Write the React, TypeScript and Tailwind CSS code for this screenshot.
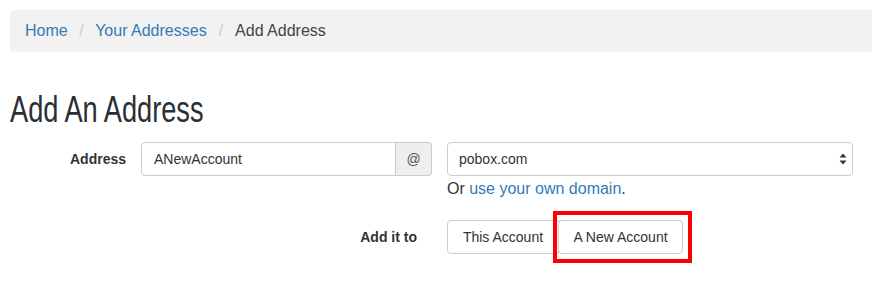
export default function App() {
  const sans = { fontFamily: '"Liberation Sans", Arial, sans-serif' };

  return (
    <div className="w-[872px] h-[290px] bg-white overflow-hidden pl-[10px] pt-[10px] text-[#333]" style={sans}>
      {/* Breadcrumb */}
      <div className="h-[42px] bg-[#f2f2f2] rounded-l-[4px] flex items-center pl-[15px] text-[16px]">
        <a className="text-[#337ab7]">Home</a>
        <span className="text-[#ccc] px-[11.5px]">/</span>
        <a className="text-[#337ab7]">Your Addresses</a>
        <span className="text-[#ccc] px-[12px]">/</span>
        <span className="text-[#444]">Add Address</span>
      </div>

      {/* Heading */}
      <h1 className="mt-[38px] text-[37px] leading-[40px] text-[#2a2f35] origin-left scale-x-[0.735] whitespace-nowrap">
        Add An Address
      </h1>

      {/* Address row */}
      <div className="mt-[12px] flex items-start">
        <label className="w-[116px] text-right font-bold text-[14px] leading-[34px] text-[#333]">Address</label>
        <div className="ml-[15px] flex h-[34px] w-[291px]">
          <div className="flex-1 border border-[#ccc] rounded-l-[4px] flex items-center pl-[12px] text-[14px] text-[#333]">
            ANewAccount
          </div>
          <div className="w-[36px] border border-l-0 border-[#ccc] bg-[#eee] rounded-r-[4px] flex items-center justify-center text-[14px] text-[#555]">
            @
          </div>
        </div>
        <div className="ml-[15px] w-[406px]">
          <div className="h-[34px] border border-[#ccc] rounded-[4px] flex items-center justify-between pl-[11px] pr-[5px] text-[14px] text-[#333]">
            <span>pobox.com</span>
            <svg width="8" height="12" viewBox="0 0 8 12">
              <path d="M4 0.5 L7.5 4.5 L0.5 4.5 Z" fill="#333" />
              <path d="M4 11.5 L7.5 7.5 L0.5 7.5 Z" fill="#333" />
            </svg>
          </div>
          <p className="mt-[2px] text-[16px] leading-[22px] text-[#333]">
            Or <a className="text-[#337ab7]">use your own domain</a>.
          </p>
        </div>
      </div>

      {/* Add it to row */}
      <div className="mt-[20px] flex items-start">
        <label className="w-[407px] text-right font-bold text-[14px] leading-[34px] text-[#333]">Add it to</label>
        <div className="ml-[30px] flex">
          <button className="h-[34px] w-[112px] border border-[#ccc] rounded-l-[4px] bg-white text-[14px] text-[#333]">
            This Account
          </button>
          <div className="relative -ml-px">
            <button className="h-[34px] w-[125px] border border-[#ccc] rounded-[4px] bg-white text-[14px] text-[#333]">
              A New Account
            </button>
            <div className="absolute left-[-5px] top-[-9px] w-[139px] h-[52px] border-[4px] border-[#f00] pointer-events-none" />
          </div>
        </div>
      </div>
    </div>
  );
}
